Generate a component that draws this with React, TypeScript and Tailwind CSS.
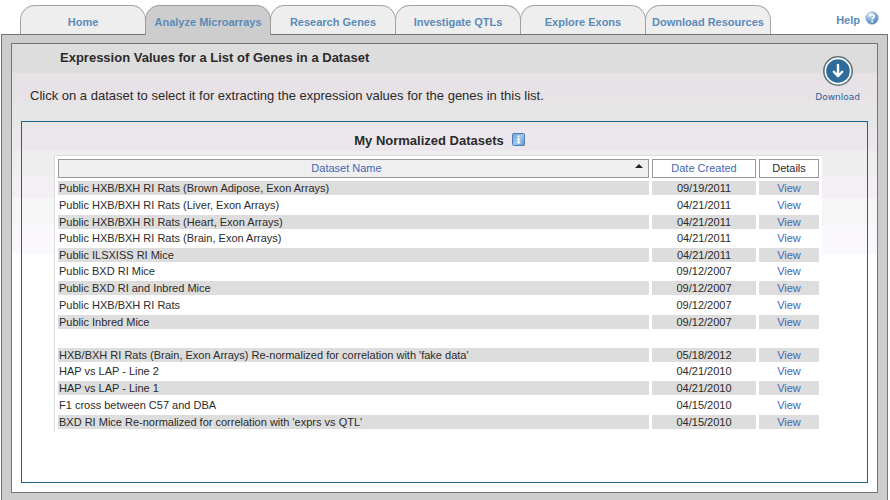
import React from "react";

type Dataset = { name: string; created: string };

const tabs = [
  "Home",
  "Analyze Microarrays",
  "Research Genes",
  "Investigate QTLs",
  "Explore Exons",
  "Download Resources",
];
const activeTab = "Analyze Microarrays";

const datasets: (Dataset | null)[] = [
  { name: "Public HXB/BXH RI Rats (Brown Adipose, Exon Arrays)", created: "09/19/2011" },
  { name: "Public HXB/BXH RI Rats (Liver, Exon Arrays)", created: "04/21/2011" },
  { name: "Public HXB/BXH RI Rats (Heart, Exon Arrays)", created: "04/21/2011" },
  { name: "Public HXB/BXH RI Rats (Brain, Exon Arrays)", created: "04/21/2011" },
  { name: "Public ILSXISS RI Mice", created: "04/21/2011" },
  { name: "Public BXD RI Mice", created: "09/12/2007" },
  { name: "Public BXD RI and Inbred Mice", created: "09/12/2007" },
  { name: "Public HXB/BXH RI Rats", created: "09/12/2007" },
  { name: "Public Inbred Mice", created: "09/12/2007" },
  null,
  { name: "HXB/BXH RI Rats (Brain, Exon Arrays) Re-normalized for correlation with 'fake data'", created: "05/18/2012" },
  { name: "HAP vs LAP - Line 2", created: "04/21/2010" },
  { name: "HAP vs LAP - Line 1", created: "04/21/2010" },
  { name: "F1 cross between C57 and DBA", created: "04/15/2010" },
  { name: "BXD RI Mice Re-normalized for correlation with 'exprs vs QTL'", created: "04/15/2010" },
];

function HelpIcon() {
  return (
    <svg width="14" height="14" viewBox="0 0 14 14" aria-hidden="true">
      <defs>
        <radialGradient id="help" cx="0.35" cy="0.25" r="0.8">
          <stop offset="0" stopColor="#e6f0fa" />
          <stop offset="0.45" stopColor="#8db4dc" />
          <stop offset="1" stopColor="#4a7fb8" />
        </radialGradient>
      </defs>
      <circle cx="7" cy="7" r="6.5" fill="url(#help)" stroke="#c3d5e8" strokeWidth="0.6" />
      <path d="M4.9 5.3C5 3.2 9.2 3.2 9.2 5.4C9.2 6.8 7.2 6.8 7.2 8.4" fill="none" stroke="#fff" strokeWidth="1.6" />
      <circle cx="7.2" cy="10.4" r="1" fill="#fff" />
    </svg>
  );
}

function InfoIcon() {
  return (
    <svg width="13" height="13" viewBox="0 0 13 13" aria-hidden="true">
      <defs>
        <linearGradient id="info" x1="0" y1="0" x2="1" y2="1">
          <stop offset="0" stopColor="#6f9fd0" />
          <stop offset="0.5" stopColor="#a3c5e6" />
          <stop offset="1" stopColor="#5b90c6" />
        </linearGradient>
      </defs>
      <rect x="0.5" y="0.5" width="12" height="12" rx="1" fill="url(#info)" stroke="#4a7eb4" />
      <path d="M5.5 2.5h2v1.5h-2zM5 5h2.5v4.5H8.500v1H5v-1h.8V6H5z" fill="#fff" />
    </svg>
  );
}

function DownloadIcon() {
  return (
    <svg width="30" height="30" viewBox="0 0 30 30" aria-hidden="true">
      <circle cx="15" cy="15" r="14.2" fill="#fff" stroke="#5f7478" strokeWidth="1.6" />
      <circle cx="15" cy="15" r="11.8" fill="#2f6c9c" />
      <path d="M15 9v11M10.800 15.800L15 20.300L19.200 15.800" fill="none" stroke="#fff" strokeWidth="2.4" strokeLinecap="round" strokeLinejoin="round" />
    </svg>
  );
}

export default function App() {
  return (
    <div className="flex min-h-screen flex-col bg-white pr-0.5 pl-px font-['Liberation_Sans',Arial,sans-serif] text-[11px] text-[#2b2b2b]">
      <header className="flex justify-between pt-[5px]">
        <nav className="relative flex pl-[19px]">
          {tabs.map((tab) => (
            <a
              key={tab}
              href="#"
              aria-current={tab === activeTab ? "page" : undefined}
              className={
                "-mr-px flex w-[126px] justify-center rounded-t-[15px] border border-b-0 pt-2 leading-4 font-bold whitespace-nowrap text-[#5b8bb9] " +
                (tab === activeTab
                  ? "z-10 -mb-px h-[30px] border-[#9a9a9a] bg-[#cdcdcd]"
                  : "h-[29px] border-[#a3a1a5] bg-[#efeeef]")
              }
            >
              {tab}
            </a>
          ))}
        </nav>
        <a href="#" className="flex gap-[5px] pt-1.5 pr-[9px] font-bold text-[#5b8bb9]">
          <span className="pt-0.5 text-[11px] leading-[14px]">Help</span>
          <HelpIcon />
        </a>
      </header>

      <div className="flex-1 border border-b-0 border-[#737573] bg-[#cdcdcd] px-[9px] pt-2 pb-[7px]">
        <main className="border border-[#737573] bg-[linear-gradient(#dddddd_29px,#e6e2e6_29px,#e6e2e6_58px,#e6e6e6_58px,#e6e6e6_84px,#ebe7ed_84px,#ebe7ed_107px,#eeeeee_107px,#eeeeee_131px,#f3eff5_131px,#f3eff5_154px,#f6f6f6_154px,#f6f6f6_181px,#fbf8fd_181px,#fbf8fd_210px,#ffffff_210px)] px-[9px] pb-[9px]">
          <div className="flex h-[77px] justify-between">
            <div className="pt-1.5 pl-2">
              <h1 className="pl-[31px] text-[13px] leading-4 font-bold">
                Expression Values for a List of Genes in a Dataset
              </h1>
              <p className="pt-[22px] pl-px text-[13px] leading-4">
                Click on a dataset to select it for extracting the expression values for the genes in this list.
              </p>
            </div>
            <button type="button" className="mr-2 flex flex-col items-center pt-3 font-['DejaVu_Sans',Verdana,sans-serif] text-[9px] leading-3 text-[#2a6496]">
              <DownloadIcon />
              <span className="pt-[5px]">Download</span>
            </button>
          </div>

          <section className="border border-[#1f628c] pb-[50px]">
            <div className="flex h-[33px] justify-center gap-2 pt-[11px] pr-2.5">
              <h2 className="text-[13px] leading-4 font-bold">My Normalized Datasets</h2>
              <button type="button" aria-label="About normalized datasets" className="h-[13px]">
                <InfoIcon />
              </button>
            </div>
            <div className="mr-[45px] ml-8 border-t border-l border-[#dddddd] bg-white">
              <table className="w-full table-fixed border-separate border-spacing-[3px] leading-[13px]">
                <colgroup>
                  <col />
                  <col className="w-[104px]" />
                  <col className="w-[60px]" />
                </colgroup>
                <thead>
                  <tr className="h-[19px]">
                    <th className="relative border border-[#999999] bg-[#efefef] p-0 pr-3.5 font-normal">
                      <a href="#" className="text-[#3f67b8]">Dataset Name</a>
                      <svg className="absolute top-1 right-[5px]" width="8" height="4" viewBox="0 0 8 4" aria-hidden="true">
                        <path d="M4 0L8 4H0Z" fill="#1d2630" />
                      </svg>
                    </th>
                    <th className="border border-[#999999] p-0 font-normal">
                      <a href="#" className="text-[#3f67b8]">Date Created</a>
                    </th>
                    <th className="border border-[#999999] p-0 font-normal">Details</th>
                  </tr>
                </thead>
                <tbody>
                  {datasets.map((d, i) => (
                    <tr key={i} className="group h-[14px] nth-[6n+4]:h-[13px] nth-[6n+6]:h-[13px]">
                      {d ? (
                        <>
                          <td className="p-0 pl-px whitespace-nowrap group-odd:bg-[#dddddd]">{d.name}</td>
                          <td className="p-0 text-center group-odd:bg-[#dddddd]">{d.created}</td>
                          <td className="p-0 text-center group-odd:bg-[#dddddd]">
                            <a href="#" className="text-[#3f67b8]">View</a>
                          </td>
                        </>
                      ) : (
                        <td colSpan={3} className="p-0" />
                      )}
                    </tr>
                  ))}
                </tbody>
              </table>
            </div>
          </section>
        </main>
      </div>
    </div>
  );
}
